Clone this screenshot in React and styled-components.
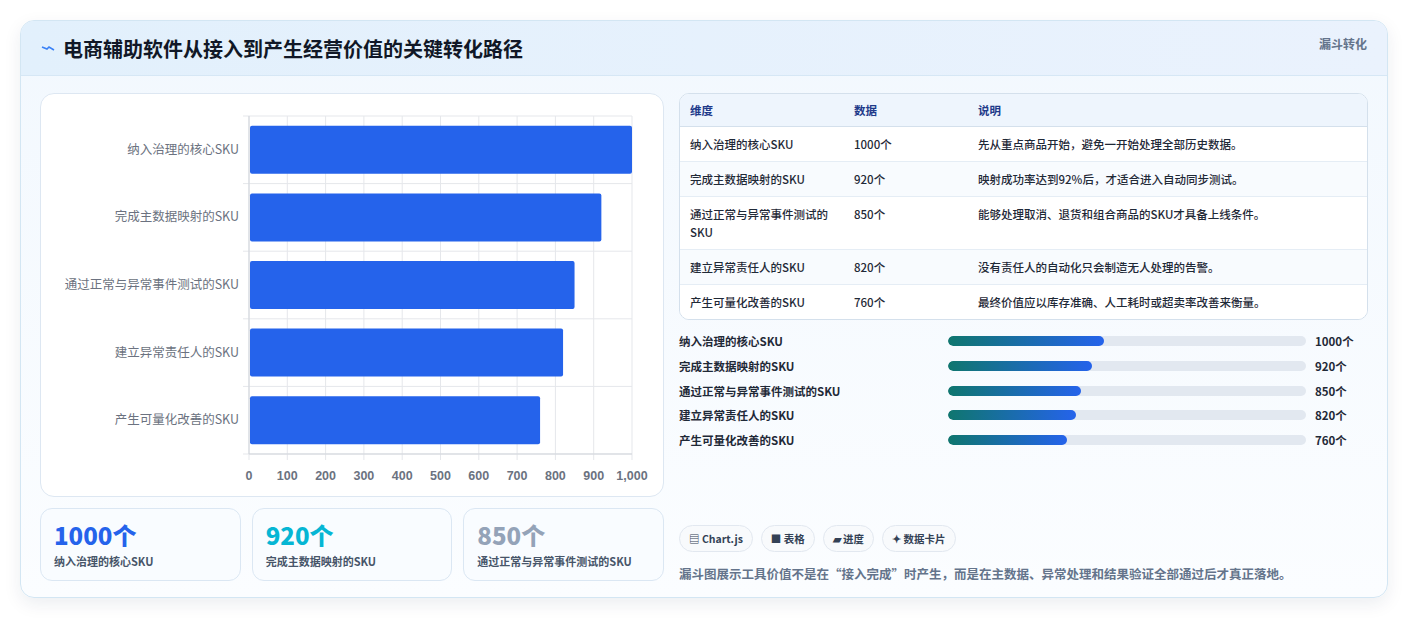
import React from "react";
import styled, { createGlobalStyle } from "styled-components";

const Global = createGlobalStyle`
  body { margin: 0; background: #fff; font-family: "Noto Sans", "Noto Sans CJK SC", sans-serif; }
`;

const rows = [
  { name: "纳入治理的核心SKU", v: 1000, note: "先从重点商品开始，避免一开始处理全部历史数据。" },
  { name: "完成主数据映射的SKU", v: 920, note: "映射成功率达到92%后，才适合进入自动同步测试。" },
  { name: "通过正常与异常事件测试的SKU", v: 850, note: "能够处理取消、退货和组合商品的SKU才具备上线条件。" },
  { name: "建立异常责任人的SKU", v: 820, note: "没有责任人的自动化只会制造无人处理的告警。" },
  { name: "产生可量化改善的SKU", v: 760, note: "最终价值应以库存准确、人工耗时或超卖率改善来衡量。" },
];

const Page = styled.div`
  padding: 20px 20px 22px 20px;
`;
const Card = styled.div`
  height: 578px;
  box-sizing: border-box;
  border: 1px solid #d3e6f3;
  border-radius: 14px;
  background: linear-gradient(180deg, #f2f8fe 0%, #fbfdff 100%);
  box-shadow: 0 6px 18px rgba(15, 40, 80, 0.08);
  overflow: hidden;
`;
const Header = styled.div`
  height: 55px;
  box-sizing: border-box;
  display: flex;
  align-items: center;
  justify-content: space-between;
  padding: 0 20px 0 20px;
  background: linear-gradient(90deg, #e2f0fc, #eaf2fd);
  border-bottom: 1px solid #d6e7f5;
`;
const Title = styled.h1`
  margin: 0;
  display: flex;
  align-items: center;
  gap: 8px;
  font-size: 20px;
  font-weight: 700;
  color: #111827;
  font-family: "Noto Sans CJK SC", sans-serif;
`;
const Tag = styled.span`
  align-self: flex-start;
  margin-top: 14px;
  font-size: 12px;
  font-weight: 700;
  color: #64748b;
  font-family: "Noto Sans CJK SC", sans-serif;
`;
const Body = styled.div`
  display: grid;
  grid-template-columns: 624px 1fr;
  gap: 15px;
  padding: 17px 19px 0 19px;
`;
const Col = styled.div`
  display: flex;
  flex-direction: column;
`;
const ChartBox = styled.div`
  height: 404px;
  box-sizing: border-box;
  background: #fff;
  border: 1px solid #dde7f2;
  border-radius: 14px;
`;
const Stats = styled.div`
  display: grid;
  grid-template-columns: repeat(3, 1fr);
  gap: 11px;
  margin-top: 11px;
`;
const Stat = styled.div`
  height: 73px;
  box-sizing: border-box;
  border: 1px solid #dbe7f3;
  border-radius: 12px;
  background: #f9fcff;
  padding: 10px 13px;
  font-family: "Noto Sans CJK SC", sans-serif;
`;
const StatNum = styled.div`
  font-size: 24px;
  font-weight: 800;
  line-height: 32px;
  color: ${(p) => p.color};
`;
const StatLabel = styled.div`
  font-size: 11px;
  font-weight: 600;
  color: #475569;
  margin-top: 2px;
`;
const Table = styled.table`
  width: 100%;
  border-collapse: separate;
  border-spacing: 0;
  border: 1px solid #d4e0ec;
  border-radius: 10px;
  overflow: hidden;
  background: #fff;
  font-family: "Noto Sans CJK SC", sans-serif;
  font-size: 11.5px;
  color: #1f2937;
`;
const Th = styled.th`
  text-align: left;
  font-weight: 700;
  color: #1e3a8a;
  background: #eef5fd;
  height: 32px;
  padding: 0 10px;
  border-bottom: 1px solid #d4e0ec;
  width: ${(p) => p.w || "auto"};
`;
const Td = styled.td`
  padding: 8px 10px;
  line-height: 18px;
  vertical-align: top;
  font-weight: 500;
  background: ${(p) => (p.alt ? "#f8fbfe" : "#fff")};
  border-top: ${(p) => (p.first ? "none" : "1px solid #e5edf5")};
`;
const Bars = styled.div`
  display: flex;
  flex-direction: column;
  gap: 6.8px;
  margin-top: 12px;
  font-family: "Noto Sans CJK SC", sans-serif;
`;
const BarRow = styled.div`
  display: grid;
  grid-template-columns: 260px 358px 1fr;
  gap: 9px;
  align-items: center;
  height: 18px;
  font-size: 11.5px;
  font-weight: 700;
  color: #1f2937;
`;
const Track = styled.div`
  height: 10px;
  border-radius: 5px;
  background: #e2e8f0;
  overflow: hidden;
`;
const Fill = styled.div`
  height: 100%;
  border-radius: 5px;
  background: linear-gradient(90deg, #0f766e, #2563eb);
`;
const Chips = styled.div`
  display: flex;
  gap: 8px;
  margin-top: 76px;
`;
const Chip = styled.span`
  height: 27px;
  box-sizing: border-box;
  display: inline-flex;
  align-items: center;
  padding: 0 9px;
  border: 1px solid #e2e8f0;
  border-radius: 14px;
  background: #f8fafc;
  font-size: 10.5px;
  font-weight: 700;
  color: #334155;
  font-family: "Noto Sans CJK SC", sans-serif;
`;
const Foot = styled.p`
  margin: 12px 0 0 0;
  font-size: 12.5px;
  font-weight: 600;
  color: #64748b;
  font-family: "Noto Sans CJK SC", sans-serif;
`;

function Chart() {
  const x0 = 208, x1 = 591, top = 22, rowH = 67.6;
  const ticks = [0, 100, 200, 300, 400, 500, 600, 700, 800, 900, 1000];
  const bottom = top + rowH * 5;
  return (
    <svg width="622" height="402" style={{ display: "block" }}>
      {ticks.map((t) => {
        const x = x0 + ((x1 - x0) * t) / 1000;
        return (
          <g key={t}>
            <line x1={x} x2={x} y1={top} y2={bottom + 6} stroke="#e5e7eb" />
            <text x={x} y={bottom + 26} textAnchor="middle" fontSize="12.5" fontWeight="600" fill="#6b7280" fontFamily="Liberation Sans, sans-serif">
              {t === 1000 ? "1,000" : t}
            </text>
          </g>
        );
      })}
      {[0, 1, 2, 3, 4, 5].map((i) => (
        <line key={i} x1={x0 - 6} x2={x1} y1={top + rowH * i} y2={top + rowH * i} stroke="#e5e7eb" />
      ))}
      <line x1={x0} x2={x0} y1={top} y2={bottom} stroke="#d1d5db" />
      <line x1={x0} x2={x1} y1={bottom} y2={bottom} stroke="#d1d5db" />
      {rows.map((r, i) => {
        const cy = top + rowH * i + rowH / 2;
        return (
          <g key={r.name}>
            <text x={x0 - 10} y={cy + 4} textAnchor="end" fontSize="12.5" fill="#6b7280" fontFamily="Noto Sans CJK SC, sans-serif">{r.name}</text>
            <rect x={x0 + 1} y={cy - 24} width={((x1 - x0) * r.v) / 1000 - 1} height="48" rx="2" fill="#2563eb" />
          </g>
        );
      })}
    </svg>
  );
}

export default function App() {
  return (
    <Page>
      <Global />
      <Card>
        <Header>
          <Title>
            <svg width="14" height="14" viewBox="0 0 14 14"><path d="M1 6 L6 8 L8 6 L13 9" stroke="#3b82f6" strokeWidth="1.6" fill="none" /></svg>
            电商辅助软件从接入到产生经营价值的关键转化路径
          </Title>
          <Tag>漏斗转化</Tag>
        </Header>
        <Body>
          <Col>
            <ChartBox><Chart /></ChartBox>
            <Stats>
              <Stat><StatNum color="#2563eb">1000个</StatNum><StatLabel>纳入治理的核心SKU</StatLabel></Stat>
              <Stat><StatNum color="#06b6d4">920个</StatNum><StatLabel>完成主数据映射的SKU</StatLabel></Stat>
              <Stat><StatNum color="#94a3b8">850个</StatNum><StatLabel>通过正常与异常事件测试的SKU</StatLabel></Stat>
            </Stats>
          </Col>
          <Col>
            <Table>
              <thead>
                <tr><Th w="144px">维度</Th><Th w="104px">数据</Th><Th>说明</Th></tr>
              </thead>
              <tbody>
                {rows.map((r, i) => (
                  <tr key={r.name}>
                    <Td first={i === 0} alt={i % 2 === 1}>{r.name}</Td>
                    <Td first={i === 0} alt={i % 2 === 1}>{r.v}个</Td>
                    <Td first={i === 0} alt={i % 2 === 1}>{r.note}</Td>
                  </tr>
                ))}
              </tbody>
            </Table>
            <Bars>
              {rows.map((r) => (
                <BarRow key={r.name}>
                  <span>{r.name}</span>
                  <Track><Fill style={{ width: `${(r.v / 1000) * 43.6}%` }} /></Track>
                  <span>{r.v}个</span>
                </BarRow>
              ))}
            </Bars>
            <Chips>
              <Chip>▤ Chart.js</Chip>
              <Chip>■ 表格</Chip>
              <Chip>▰ 进度</Chip>
              <Chip>✦ 数据卡片</Chip>
            </Chips>
            <Foot>漏斗图展示工具价值不是在“接入完成”时产生，而是在主数据、异常处理和结果验证全部通过后才真正落地。</Foot>
          </Col>
        </Body>
      </Card>
    </Page>
  );
}
